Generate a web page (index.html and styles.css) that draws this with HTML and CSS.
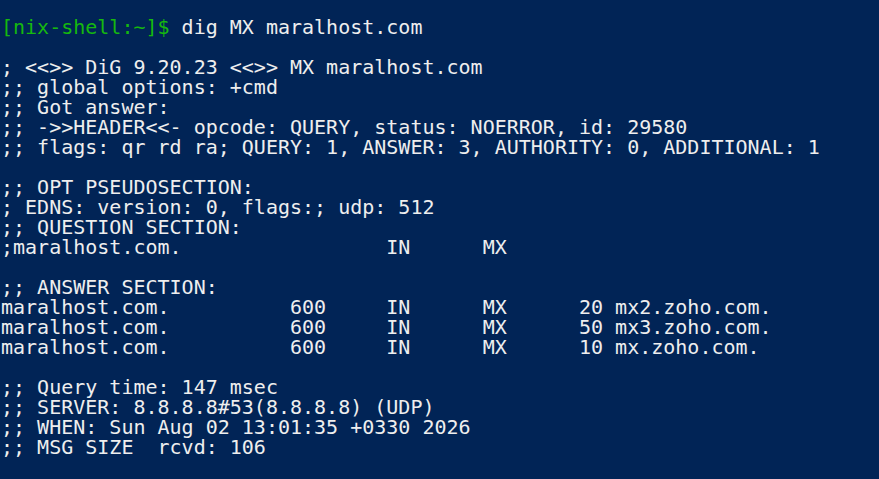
FILE: index.html
```html
<!DOCTYPE html>
<html>
<head>
<meta charset="utf-8">
<link rel="stylesheet" href="styles.css">
</head>
<body>
<pre class="term"><span class="prompt">[nix-shell:~]$</span> dig MX maralhost.com

; &lt;&lt;&gt;&gt; DiG 9.20.23 &lt;&lt;&gt;&gt; MX maralhost.com
;; global options: +cmd
;; Got answer:
;; -&gt;&gt;HEADER&lt;&lt;- opcode: QUERY, status: NOERROR, id: 29580
;; flags: qr rd ra; QUERY: 1, ANSWER: 3, AUTHORITY: 0, ADDITIONAL: 1

;; OPT PSEUDOSECTION:
; EDNS: version: 0, flags:; udp: 512
;; QUESTION SECTION:
;maralhost.com.                 IN      MX

;; ANSWER SECTION:
maralhost.com.          600     IN      MX      20 mx2.zoho.com.
maralhost.com.          600     IN      MX      50 mx3.zoho.com.
maralhost.com.          600     IN      MX      10 mx.zoho.com.

;; Query time: 147 msec
;; SERVER: 8.8.8.8#53(8.8.8.8) (UDP)
;; WHEN: Sun Aug 02 13:01:35 +0330 2026
;; MSG SIZE  rcvd: 106</pre>
</body>
</html>
```
FILE: styles.css
```css
html, body {
  margin: 0;
  padding: 0;
  background: #012456;
  height: 100%;
  overflow: hidden;
}
.term {
  margin: 0;
  padding: 17px 0 0 1px;
  font-family: "DejaVu Sans Mono", "Liberation Mono", monospace;
  font-size: 20px;
  line-height: 20px;
  color: #eeeeee;
  white-space: pre;
}
.prompt {
  color: #16b80e;
}
```
